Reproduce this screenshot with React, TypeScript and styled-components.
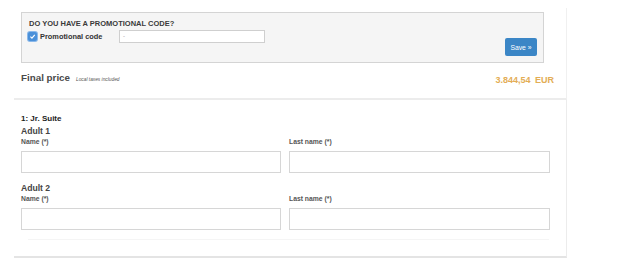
import styled, { createGlobalStyle } from "styled-components"

const Global = createGlobalStyle`
  body {
    margin: 0;
    background: #fff;
    font-family: "Liberation Sans", Arial, sans-serif;
  }
`

const Page = styled.div`
  width: 553px;
  margin-left: 14px;
  padding-top: 8px;
`

const TopPanel = styled.div`
  padding: 4px 12px 0 7px;
  border-right: 1px solid #f0f0f0;
  border-bottom: 2px solid #ececec;
`

const PromoBox = styled.div`
  width: 523px;
  height: 51px;
  box-sizing: border-box;
  background: #f5f5f5;
  border: 1px solid #d4d4d4;
  padding: 6px 6px 0 7px;
  display: flex;
  flex-direction: column;
`

const PromoTitle = styled.div`
  font-size: 7.5px;
  font-weight: bold;
  color: #3a3a3a;
  line-height: 10px;
`

const PromoRow = styled.div`
  display: flex;
  align-items: center;
  margin-top: 1px;
  height: 13px;
`

const Check = styled.span`
  width: 9px;
  height: 9px;
  border-radius: 2px;
  background: #4a90d9;
  box-shadow: 0 0 0 1px #8ab8ea;
  display: flex;
  align-items: center;
  justify-content: center;
  margin-left: -1px;
`

const CheckLabel = styled.span`
  font-size: 7.4px;
  font-weight: bold;
  color: #333;
  margin-left: 3px;
  width: 79px;
`

const PromoInput = styled.div`
  width: 146px;
  height: 13px;
  box-sizing: border-box;
  background: #fff;
  border: 1px solid #cfcfcf;
  font-size: 6px;
  color: #999;
  padding-left: 3px;
  line-height: 11px;
`

const SaveRow = styled.div`
  display: flex;
  justify-content: flex-end;
  margin-top: -5px;
`

const SaveButton = styled.div`
  width: 32px;
  height: 18px;
  border-radius: 2px;
  background: #3b86c6;
  color: #fff;
  font-size: 6.8px;
  display: flex;
  align-items: center;
  justify-content: center;
`

const PriceRow = styled.div`
  display: flex;
  align-items: baseline;
  height: 35px;
  padding-top: 9px;
  box-sizing: border-box;
`

const PriceLabel = styled.span`
  font-size: 9.8px;
  font-weight: bold;
  color: #4a4a4a;
`

const TaxNote = styled.span`
  font-size: 4.8px;
  font-style: italic;
  color: #555;
  margin-left: 6px;
  flex: 1;
`

const Price = styled.span`
  font-size: 9px;
  font-weight: bold;
  color: #e3ad55;
  word-spacing: 2px;
  position: relative;
  top: 2px;
`

const BottomPanel = styled.div`
  padding: 13px 17px 16px 7px;
  border-right: 1px solid #ececec;
  border-bottom: 2px solid #e4e4e4;
`

const RoomTitle = styled.div`
  font-size: 8px;
  font-weight: bold;
  color: #222;
  line-height: 11px;
`

const AdultTitle = styled.div<{ $first?: boolean }>`
  font-size: 8.6px;
  font-weight: bold;
  color: #444;
  line-height: 11px;
  margin-top: ${(p) => (p.$first ? "2px" : "10px")};
`

const FieldGrid = styled.div`
  display: grid;
  grid-template-columns: 260px 261px;
  column-gap: 8px;
`

const Field = styled.div`
  display: flex;
  flex-direction: column;
`

const FieldLabel = styled.div`
  font-size: 6.8px;
  color: #555;
  font-weight: bold;
  line-height: 9px;
  margin-bottom: 5px;
`

const TextBox = styled.div`
  height: 22px;
  box-sizing: border-box;
  border: 1px solid #d6d6d6;
  background: #fff;
`

const FaintLine = styled.div`
  height: 1px;
  background: #f5f5f5;
  margin: 9px 0 0 7px;
`

const adults = [1, 2]

export default function App() {
  return (
    <Page>
      <Global />
      <TopPanel>
        <PromoBox>
          <PromoTitle>DO YOU HAVE A PROMOTIONAL CODE?</PromoTitle>
          <PromoRow>
            <Check>
              <svg width="7" height="7" viewBox="0 0 10 10">
                <path d="M2 5.2 L4.2 7.4 L8.2 2.6" stroke="#fff" strokeWidth="1.6" fill="none" />
              </svg>
            </Check>
            <CheckLabel>Promotional code</CheckLabel>
            <PromoInput>-</PromoInput>
          </PromoRow>
          <SaveRow>
            <SaveButton>Save »</SaveButton>
          </SaveRow>
        </PromoBox>
        <PriceRow>
          <PriceLabel>Final price</PriceLabel>
          <TaxNote>Local taxes included</TaxNote>
          <Price>3.844,54 EUR</Price>
        </PriceRow>
      </TopPanel>
      <BottomPanel>
        <RoomTitle>1: Jr. Suite</RoomTitle>
        {adults.map((n) => (
          <div key={n}>
            <AdultTitle $first={n === 1}>Adult {n}</AdultTitle>
            <FieldGrid>
              <Field>
                <FieldLabel>Name (*)</FieldLabel>
                <TextBox />
              </Field>
              <Field>
                <FieldLabel>Last name (*)</FieldLabel>
                <TextBox />
              </Field>
            </FieldGrid>
          </div>
        ))}
        <FaintLine />
      </BottomPanel>
    </Page>
  )
}
